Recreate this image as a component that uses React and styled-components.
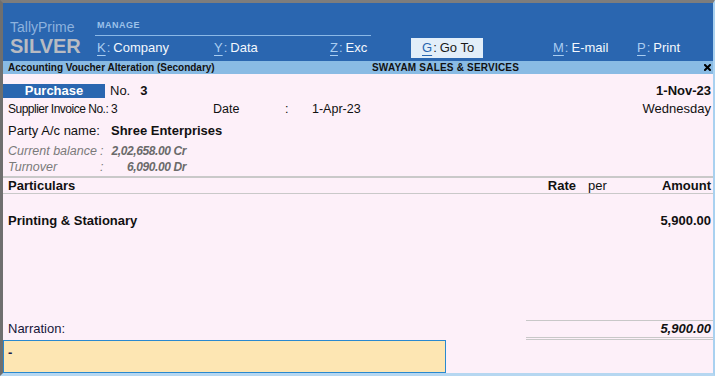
import React from 'react'
import styled, { createGlobalStyle } from 'styled-components'

const GlobalStyle = createGlobalStyle`
  html, body {
    margin: 0;
    padding: 0;
    background: #ffffff;
  }
  body {
    font-family: "Liberation Sans", Arial, sans-serif;
    color: #111;
  }
`

const menu = [
  { key: 'K', label: 'Company', w: 117 },
  { key: 'Y', label: 'Data', w: 116 },
  { key: 'Z', label: 'Exc', w: 83 },
  { key: 'G', label: 'Go To', w: 72, active: true },
  { key: 'M', label: 'E-mail', w: 84, ml: 68 },
  { key: 'P', label: 'Print', w: 70 },
]

const App = () => {
  return (
    <>
      <GlobalStyle />
      <Window>
        <Header>
          <Brand>
            <Product>TallyPrime</Product>
            <Edition>SILVER</Edition>
          </Brand>
          <MenuArea>
            <SectionLabel>MANAGE</SectionLabel>
            <MenuRow>
              {menu.map((m) => (
                <MenuItem key={m.key} $w={m.w} $ml={m.ml} $active={m.active}>
                  <Key $active={m.active}>{m.key}</Key>
                  <Colon $active={m.active}>:</Colon>
                  {m.label}
                </MenuItem>
              ))}
            </MenuRow>
          </MenuArea>
        </Header>

        <TitleBar>
          <TitleLeft>Accounting Voucher Alteration (Secondary)</TitleLeft>
          <TitleCenter>SWAYAM SALES &amp; SERVICES</TitleCenter>
          <Close width="7" height="7" viewBox="0 0 7 7">
            <path d="M1 1 L6 6 M6 1 L1 6" stroke="#000" strokeWidth="2" strokeLinecap="square" />
          </Close>
        </TitleBar>

        <Body>
          <VoucherRow>
            <VoucherType>Purchase</VoucherType>
            <NoLabel>No.</NoLabel>
            <NoValue>3</NoValue>
            <RightBold>1-Nov-23</RightBold>
          </VoucherRow>

          <InfoRow $mt={3}>
            <Label $w={103} $narrow>Supplier Invoice No.:</Label>
            <Value $w={102} $size={12}>3</Value>
            <Value $w={72} $size={12.5}>Date</Value>
            <Value $w={27} $size={12.5}>:</Value>
            <Value $size={12.5}>1-Apr-23</Value>
            <RightText>Wednesday</RightText>
          </InfoRow>

          <InfoRow $mt={6}>
            <Label $w={103}>Party A/c name:</Label>
            <Value $bold>Shree Enterprises</Value>
          </InfoRow>

          <InfoRow $mt={4}>
            <MutedLabel $w={92}>Current balance</MutedLabel>
            <MutedLabel $w={11}>:</MutedLabel>
            <MutedValue>2,02,658.00 Cr</MutedValue>
          </InfoRow>

          <InfoRow>
            <MutedLabel $w={92}>Turnover</MutedLabel>
            <MutedLabel $w={11}>:</MutedLabel>
            <MutedValue>6,090.00 Dr</MutedValue>
          </InfoRow>

          <ColumnHeader>
            <Particulars>Particulars</Particulars>
            <RateCol>Rate</RateCol>
            <PerCol>per</PerCol>
            <AmountCol>Amount</AmountCol>
          </ColumnHeader>

          <EntryRow>
            <Particulars>Printing &amp; Stationary</Particulars>
            <RateCol />
            <PerCol />
            <AmountCol>5,900.00</AmountCol>
          </EntryRow>

          <Spacer />

          <Footer>
            <NarrationLabel>Narration:</NarrationLabel>
            <Total>5,900.00</Total>
          </Footer>
          <NarrationBox>-</NarrationBox>
        </Body>
      </Window>
    </>
  )
}

const Window = styled.div`
  width: 710px;
  border-top: 3px solid #7d7d7d;
  border-left: 3px solid #6f6f6f;
  border-right: 2px solid #a9d1f0;
  border-bottom: 3px solid #b6d7f1;
  display: flex;
  flex-direction: column;
`

const Header = styled.div`
  height: 58px;
  background: #2a66b0;
  display: flex;
`

const Brand = styled.div`
  width: 92px;
  box-sizing: border-box;
  padding: 16px 0 0 7px;
`

const Product = styled.div`
  font-size: 14px;
  line-height: 16px;
  color: #8db2de;
`

const Edition = styled.div`
  font-size: 20px;
  line-height: 22px;
  font-weight: bold;
  color: #b8bbc2;
`

const MenuArea = styled.div`
  flex: 1;
  padding-top: 17px;
`

const SectionLabel = styled.div`
  width: 274px;
  padding: 0 0 4px 2px;
  font-size: 9px;
  line-height: 11px;
  font-weight: bold;
  letter-spacing: 0.5px;
  color: #9cc2ea;
  border-bottom: 1px solid #8bb8e6;
`

const MenuRow = styled.div`
  display: flex;
  margin-top: 2px;
  height: 20px;
`

const MenuItem = styled.div`
  width: ${(p) => p.$w}px;
  margin-left: ${(p) => p.$ml || 0}px;
  box-sizing: border-box;
  padding-left: ${(p) => (p.$active ? 11 : 2)}px;
  font-size: 13px;
  line-height: 20px;
  white-space: nowrap;
  color: ${(p) => (p.$active ? '#1a1a1a' : '#f4f8fd')};
  background: ${(p) => (p.$active ? '#e2eef9' : 'transparent')};
`

const Key = styled.span`
  color: ${(p) => (p.$active ? '#2a66b0' : '#a9cdf1')};
  text-decoration: underline;
  text-underline-offset: 3px;
`

const Colon = styled.span`
  color: ${(p) => (p.$active ? '#1a1a1a' : '#a9cdf1')};
  margin: 0 3px 0 1px;
`

const TitleBar = styled.div`
  height: 13px;
  background: #89bbe4;
  display: flex;
  align-items: center;
  font-size: 10px;
  line-height: 13px;
  font-weight: bold;
  color: #111;
`

const TitleLeft = styled.div`
  width: 369px;
  box-sizing: border-box;
  padding-left: 5px;
`

const TitleCenter = styled.div`
  flex: 1;
  letter-spacing: 0.2px;
`

const Close = styled.svg`
  margin-right: 2px;
  display: block;
`

const Body = styled.div`
  height: 299px;
  background: #fdf0f9;
  display: flex;
  flex-direction: column;
`

const VoucherRow = styled.div`
  margin-top: 10px;
  height: 14px;
  display: flex;
  align-items: center;
  font-size: 13px;
  line-height: 14px;
  padding-right: 2px;
`

const VoucherType = styled.div`
  width: 102px;
  height: 14px;
  background: #2a66b0;
  color: #fff;
  font-weight: bold;
  text-align: center;
`

const NoLabel = styled.span`
  margin-left: 5px;
`

const NoValue = styled.span`
  margin-left: 10px;
  font-weight: bold;
`

const RightBold = styled.span`
  margin-left: auto;
  font-weight: bold;
`

const InfoRow = styled.div`
  margin-top: ${(p) => p.$mt || 0}px;
  height: 16px;
  display: flex;
  align-items: baseline;
  padding: 0 2px 0 5px;
  font-size: 13px;
  line-height: 16px;
  white-space: nowrap;
`

const Label = styled.span`
  width: ${(p) => p.$w}px;
  font-size: ${(p) => (p.$narrow ? 12 : 13)}px;
  letter-spacing: ${(p) => (p.$narrow ? -0.5 : 0)}px;
`

const Value = styled.span`
  ${(p) => (p.$w ? `width: ${p.$w}px;` : '')}
  font-size: ${(p) => p.$size || 13}px;
  font-weight: ${(p) => (p.$bold ? 'bold' : 'normal')};
`

const RightText = styled.span`
  margin-left: auto;
`

const MutedLabel = styled.span`
  width: ${(p) => p.$w}px;
  font-size: 12.5px;
  font-style: italic;
  color: #7a7a7a;
`

const MutedValue = styled.span`
  width: 75px;
  text-align: right;
  font-size: 12px;
  letter-spacing: -0.4px;
  font-style: italic;
  font-weight: bold;
  color: #6a6a6a;
`

const ColumnHeader = styled.div`
  margin-top: 1px;
  height: 15px;
  display: flex;
  padding: 0 2px 0 5px;
  border-top: 2px solid #c9c9c9;
  border-bottom: 1px solid #c9c9c9;
  font-size: 13px;
  line-height: 15px;
  font-weight: bold;
`

const EntryRow = styled.div`
  margin-top: 19px;
  height: 16px;
  display: flex;
  padding: 0 2px 0 5px;
  font-size: 13px;
  line-height: 16px;
  font-weight: bold;
`

const Particulars = styled.div`
  flex: 1;
`

const RateCol = styled.div`
  width: 60px;
  text-align: right;
`

const PerCol = styled.div`
  width: 44px;
  box-sizing: border-box;
  padding-left: 12px;
  font-weight: normal;
`

const AmountCol = styled.div`
  width: 91px;
  text-align: right;
`

const Spacer = styled.div`
  flex: 1;
`

const Footer = styled.div`
  display: flex;
  align-items: flex-end;
  justify-content: space-between;
`

const NarrationLabel = styled.div`
  padding: 0 0 3px 5px;
  font-size: 13px;
  line-height: 16px;
  color: #16163a;
`

const Total = styled.div`
  width: 187px;
  box-sizing: border-box;
  padding-right: 2px;
  border-top: 1px solid #c8c8c8;
  border-bottom: 3px double #c8c8c8;
  text-align: right;
  font-size: 13px;
  line-height: 16px;
  font-weight: bold;
  font-style: italic;
`

const NarrationBox = styled.div`
  width: 443px;
  height: 33px;
  box-sizing: border-box;
  padding: 4px 0 0 4px;
  background: #fde6b3;
  border: 1px solid #2a89cf;
  font-size: 13px;
  line-height: 16px;
  font-weight: bold;
  color: #1b1b4b;
`

export default App
